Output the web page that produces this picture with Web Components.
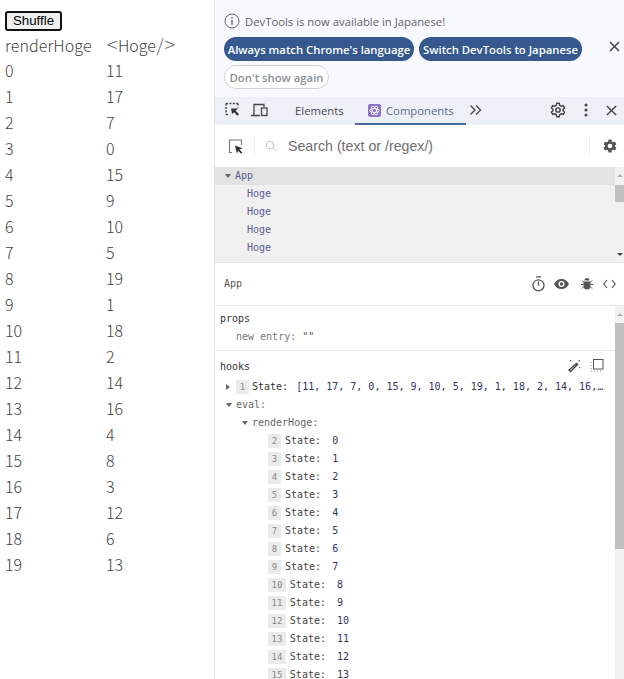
<!DOCTYPE html>
<html lang="en">
<head>
<meta charset="utf-8">
<title>Shuffle</title>
<style>
html, body { margin: 0; height: 100%; background: #fff; overflow: hidden; }
body { display: flex; width: 624px; height: 679px; }
</style>
</head>
<body>
<app-pane></app-pane>
<dev-tools>
  <info-bar></info-bar>
  <tab-bar></tab-bar>
  <search-bar></search-bar>
  <component-tree></component-tree>
  <inspected-head></inspected-head>
  <inspected-data></inspected-data>
</dev-tools>
<script>
const ORDER = [11, 17, 7, 0, 15, 9, 10, 5, 19, 1, 18, 2, 14, 16, 4, 8, 3, 12, 6, 13];

class AppPane extends HTMLElement {
  constructor() {
    super();
    const rows = ORDER.map((v, i) => `<span>${i}</span><span>${v}</span>`).join("");
    this.attachShadow({ mode: "open" }).innerHTML = `
<style>
:host {
  display: block;
  box-sizing: border-box;
  flex: none;
  width: 215px;
  height: 679px;
  padding: 11px 0 0 5px;
  border-right: 1px solid #e4e4e4;
  color: #444;
  font: 300 16px/26px "Noto Sans CJK JP", "Noto Sans", sans-serif;
}
button {
  display: block;
  box-sizing: border-box;
  width: 57px;
  height: 20px;
  padding: 0;
  margin-bottom: 1px;
  background: #efefef;
  border: 2px solid #111;
  border-radius: 3px;
  color: #000;
  font: 13.3px/16px "Liberation Sans", Arial, sans-serif;
}
.grid {
  display: grid;
  grid-template-columns: 101px auto;
  grid-template-rows: 25px;
  grid-auto-rows: 26px;
  justify-content: start;
}
.head { letter-spacing: .1px; }
.wide { display: inline-block; width: 12px; line-height: 1; text-align: center; color: #666; font-size: 20px; }
.slash { display: inline-block; width: 8px; line-height: 1; text-align: center; color: #666; font-size: 18px; }
</style>
<button>Shuffle</button>
<div class="grid"><span class="head">renderHoge</span><span><span class="wide">&lt;</span>Hoge<span class="slash">/</span><span class="wide">&gt;</span></span>${rows}</div>`;
  }
}

class DevTools extends HTMLElement {
  constructor() {
    super();
    this.attachShadow({ mode: "open" }).innerHTML = `
<style>
:host {
  display: flex;
  flex-direction: column;
  width: 409px;
  height: 679px;
  overflow: hidden;
  font-family: "Liberation Sans", Arial, sans-serif;
}
</style>
<slot></slot>`;
  }
}

class InfoBar extends HTMLElement {
  constructor() {
    super();
    this.attachShadow({ mode: "open" }).innerHTML = `
<style>
:host {
  display: block;
  position: relative;
  box-sizing: border-box;
  flex: none;
  height: 97px;
  padding: 13px 0 0 9px;
  background: #f8f9fe;
  font-family: "Open Sans", "Noto Sans", sans-serif;
}
.msg {
  display: flex;
  align-items: center;
  gap: 5px;
  height: 16px;
  color: #5f6368;
  font-size: 11.3px;
}
.actions {
  display: flex;
  flex-wrap: wrap;
  gap: 4px 5px;
  width: 370px;
  margin-top: 8px;
}
.btn {
  display: flex;
  align-items: center;
  justify-content: center;
  box-sizing: border-box;
  height: 24px;
  border-radius: 12px;
  background: #35598f;
  color: #fff;
  font-size: 11.3px;
  font-weight: 600;
  white-space: nowrap;
}
.one { width: 190px; }
.two { width: 163px; }
.three {
  width: 105px;
  background: #fff;
  border: 1px solid #d0d3d8;
  color: #8b8f94;
}
.close { position: absolute; left: 394px; top: 41px; }
</style>
<div class="msg">
  <svg width="16" height="16" viewBox="0 0 16 16" fill="none" stroke="#5f6368">
    <circle cx="8" cy="8" r="7"/>
    <path d="M8 7v5M8 4v1.4" stroke-width="1.4"/>
  </svg>
  <span>DevTools is now available in Japanese!</span>
</div>
<div class="actions">
  <div class="btn one">Always match Chrome's language</div>
  <div class="btn two">Switch DevTools to Japanese</div>
  <div class="btn three">Don't show again</div>
</div>
<svg class="close" width="12" height="12" viewBox="0 0 12 12" stroke="#444" stroke-width="1.5">
  <path d="M1 1l9 9M10 1l-9 9"/>
</svg>`;
  }
}

class TabBar extends HTMLElement {
  constructor() {
    super();
    this.attachShadow({ mode: "open" }).innerHTML = `
<style>
:host {
  display: flex;
  align-items: center;
  box-sizing: border-box;
  flex: none;
  height: 28px;
  padding-bottom: 2px;
  background: #eef0f8;
  color: #4a4d52;
  font: 11.3px "Open Sans", "Noto Sans", sans-serif;
}
svg { flex: none; display: block; }
.inspect { margin-left: 10px; }
.device { margin-left: 10px; }
.elements { margin-left: 26px; width: 60px; }
.tab {
  display: flex;
  align-items: center;
  gap: 5px;
  box-sizing: border-box;
  width: 111px;
  height: 28px;
  margin-bottom: -2px;
  padding-left: 13px;
  border-bottom: 2px solid #4a6a9c;
  color: #5a6b8c;
}
.more { margin-left: 3px; }
.gear { margin-left: 68px; }
.dots { margin-left: 18px; }
.close { margin-left: 18px; }
</style>
<svg class="inspect" width="16" height="16" viewBox="0 0 16 16" fill="none" stroke="#444">
  <path d="M1 1.5h12M1 1.5v11M1 12.5h3M13 1.5v4" stroke-dasharray="2 1.4" stroke-width="1.4"/>
  <path d="M6 6.5h7l-2.3 2.2 3.3 3.6-1.6 1.5-3.2-3.6L7 12z" fill="#333" stroke="none"/>
</svg>
<svg class="device" width="18" height="16" viewBox="0 0 18 16" fill="none" stroke="#444" stroke-width="1.3">
  <path d="M0 13.5h9M3 13V2.5h10V5"/>
  <rect x="10.5" y="6" width="5.5" height="7.5"/>
</svg>
<span class="elements">Elements</span>
<div class="tab">
  <svg width="13" height="13" viewBox="0 0 13 13">
    <rect width="13" height="13" rx="2" fill="#8d74c9"/>
    <g fill="none" stroke="#fff" stroke-width=".8">
      <ellipse cx="6.5" cy="6.5" rx="4.8" ry="2"/>
      <ellipse cx="6.5" cy="6.5" rx="4.8" ry="2" transform="rotate(60 6.5 6.5)"/>
      <ellipse cx="6.5" cy="6.5" rx="4.8" ry="2" transform="rotate(120 6.5 6.5)"/>
    </g>
  </svg>
  <span>Components</span>
</div>
<svg class="more" width="13" height="12" viewBox="0 0 13 12" fill="none" stroke="#555" stroke-width="1.5">
  <path d="M1.5 1.5L6 6l-4.5 4.5M7 1.5L11.5 6 7 10.5"/>
</svg>
<svg class="gear" width="16" height="16" viewBox="0 0 24 24" fill="none" stroke="#444" stroke-width="2.2">
  <circle cx="12" cy="12" r="3.2"/>
  <path d="M10 2h4l.6 3 2.4 1.4 2.9-1 2 3.5-2.3 2v2.2l2.3 2-2 3.5-2.9-1-2.4 1.4-.6 3h-4l-.6-3-2.4-1.4-2.9 1-2-3.5 2.3-2v-2.2l-2.3-2 2-3.5 2.9 1L9.4 5z" stroke-linejoin="round"/>
</svg>
<svg class="dots" width="4" height="14" viewBox="0 0 4 14" fill="#444">
  <circle cx="2" cy="2" r="1.5"/><circle cx="2" cy="7" r="1.5"/><circle cx="2" cy="12" r="1.5"/>
</svg>
<svg class="close" width="11" height="11" viewBox="0 0 12 12" stroke="#444" stroke-width="1.5">
  <path d="M1 1l10 10M11 1L1 11"/>
</svg>`;
  }
}

class SearchBar extends HTMLElement {
  constructor() {
    super();
    this.attachShadow({ mode: "open" }).innerHTML = `
<style>
:host {
  display: flex;
  align-items: center;
  box-sizing: border-box;
  flex: none;
  height: 42px;
  padding-right: 7px;
  background: #fff;
  color: #6e6e6e;
  font: 14.2px "Liberation Sans", Arial, sans-serif;
}
svg { flex: none; display: block; }
.pick { margin-left: 13px; }
.sep { flex: none; width: 1px; height: 20px; background: #f0f0f0; }
.sep.a { margin-left: 10px; }
.glass { margin-left: 10px; }
.text { margin-left: 11px; flex: 1; white-space: nowrap; }
.gear { margin-left: 13px; }
</style>
<svg class="pick" width="16" height="17" viewBox="0 0 16 17" fill="none" stroke="#777" stroke-width="1.1">
  <path d="M4 14.5H1.5V2h12v5"/>
  <path d="M7 7.5l7.5 2.8-3 1.2 2.8 3-1.3 1.2-2.8-3-1.3 2.8z" fill="#333" stroke="none"/>
</svg>
<span class="sep a"></span>
<svg class="glass" width="12" height="12" viewBox="0 0 12 12" fill="none" stroke="#c4c4c4">
  <circle cx="5" cy="5" r="3.8"/><path d="M8 8l3.5 3.5"/>
</svg>
<span class="text">Search (text or /regex/)</span>
<span class="sep"></span>
<svg class="gear" width="14" height="14" viewBox="0 0 24 24" fill="#555">
  <path fill-rule="evenodd" d="M9.5 1h5l.7 3.3 2 1.2 3.3-1 2.5 4.3-2.5 2.2v2l2.5 2.2-2.5 4.3-3.3-1-2 1.2-.7 3.3h-5l-.7-3.3-2-1.2-3.3 1L1 15.2 3.5 13v-2L1 8.8l2.5-4.3 3.3 1 2-1.2zM12 8a4 4 0 100 8 4 4 0 000-8z"/>
</svg>`;
  }
}

class ComponentTree extends HTMLElement {
  constructor() {
    super();
    const hoge = '<div class="row child">Hoge</div>'.repeat(4);
    this.attachShadow({ mode: "open" }).innerHTML = `
<style>
:host {
  display: flex;
  box-sizing: border-box;
  flex: none;
  height: 96px;
  overflow: hidden;
  background: #f0f0f0;
  border-bottom: 1px solid #e6e6e6;
  color: #5c5c96;
  font: 10px/18px "DejaVu Sans Mono", "Liberation Mono", monospace;
}
.rows { flex: 1; }
.row { height: 18px; }
.app { display: flex; align-items: center; background: #e3e3e3; padding-left: 10px; gap: 4px; }
.child { padding-left: 32px; }
.arrow { width: 0; height: 0; border: 3px solid transparent; border-top: 4px solid #666; border-bottom: 0; }
.bar { position: relative; flex: none; width: 9px; background: #f1f1f1; }
.up, .down { position: absolute; left: 2px; width: 0; height: 0; border: 3px solid transparent; }
.up { top: 7px; border-top: 0; border-bottom: 3px solid #b0b0b0; }
.down { bottom: 6px; border-bottom: 0; border-top: 3px solid #444; }
.thumb { position: absolute; top: 18px; left: 0; width: 9px; height: 17px; background: #c1c1c1; }
</style>
<div class="rows">
  <div class="row app"><span class="arrow"></span><span>App</span></div>
  ${hoge}
</div>
<div class="bar"><span class="up"></span><span class="thumb"></span><span class="down"></span></div>`;
  }
}

class InspectedHead extends HTMLElement {
  constructor() {
    super();
    this.attachShadow({ mode: "open" }).innerHTML = `
<style>
:host {
  display: flex;
  align-items: center;
  box-sizing: border-box;
  flex: none;
  height: 43px;
  padding: 0 0 1px 9px;
  background: #fff;
  border-bottom: 1px solid #e8e8e8;
  color: #555;
  font: 10px "DejaVu Sans Mono", "Liberation Mono", monospace;
}
svg { flex: none; display: block; }
.name { flex: 1; }
.eye { margin-left: 9px; }
.bug { margin-left: 12px; }
.code { margin-left: 10px; margin-right: 8px; }
</style>
<span class="name">App</span>
<svg width="13" height="16" viewBox="0 0 13 16" fill="none" stroke="#555" stroke-width="1.3">
  <path d="M4 .8h5M6.5 5.5V9.5"/><circle cx="6.5" cy="9.3" r="5.5"/>
</svg>
<svg class="eye" width="15" height="10" viewBox="0 0 15 10">
  <path fill="#555" fill-rule="evenodd" d="M7.5 0C4 0 1.5 2 0 5c1.5 3 4 5 7.5 5S13.5 8 15 5c-1.5-3-4-5-7.5-5zm0 2a3 3 0 110 6 3 3 0 010-6z"/>
  <circle cx="7.5" cy="5" r="1.7" fill="#555"/>
</svg>
<svg class="bug" width="12" height="13" viewBox="0 0 12 13" fill="#555">
  <path d="M3.5 3.5a2.5 2.5 0 015 0zM2.5 4.5h7V9a3.5 3.5 0 01-7 0z"/>
  <path d="M1 3.5l2 2M11 3.5l-2 2M0 7.5h2.5M12 7.5H9.5M1 11.5L3 9.5M11 11.5L9 9.5" stroke="#555" fill="none"/>
</svg>
<svg class="code" width="13" height="10" viewBox="0 0 13 10" fill="none" stroke="#555" stroke-width="1.2">
  <path d="M4 1L.8 5 4 9M9 1l3.2 4L9 9"/>
</svg>`;
  }
}

class StateRow extends HTMLElement {
  constructor() {
    super();
    this.attachShadow({ mode: "open" }).innerHTML = `
<style>
:host { display: flex; align-items: center; height: 18px; padding-left: 53px; white-space: pre; }
.num {
  display: flex; align-items: center; justify-content: center;
  box-sizing: border-box; height: 14px; min-width: 13px; padding: 0 3.5px; margin-right: 4px;
  background: #ebebeb; color: #8a8a8a; font-size: 9px;
}
.val { margin-left: 11px; color: #33335f; }
</style>
<span class="num"></span><span class="key"></span><span class="val"></span>`;
  }
  connectedCallback() {
    const s = this.shadowRoot;
    s.querySelector(".num").textContent = this.getAttribute("n");
    s.querySelector(".key").textContent = "State:";
    s.querySelector(".val").textContent = this.getAttribute("v");
  }
}

class InspectedData extends HTMLElement {
  constructor() {
    super();
    const rows = Array.from({ length: 14 }, (_, i) =>
      `<state-row n="${i + 2}" v="${i}"></state-row>`).join("");
    this.attachShadow({ mode: "open" }).innerHTML = `
<style>
:host {
  display: flex;
  flex: 1;
  min-height: 0;
  background: #fff;
  color: #444;
  font: 10px/18px "DejaVu Sans Mono", "Liberation Mono", monospace;
}
.body { flex: 1; min-width: 0; overflow: hidden; }
.props { box-sizing: border-box; height: 45px; padding: 4px 0 0 5px; border-bottom: 1px solid #e8e8e8; }
.label { height: 18px; color: #333; }
.entry { padding-left: 16px; color: #777; }
.entry span { color: #555; }
.hooks { position: relative; padding-top: 7px; }
.tools { position: absolute; top: 8px; right: 11px; display: flex; gap: 9px; }
.label.h { height: 20px; padding-left: 5px; }
.arrow-row { display: flex; align-items: center; height: 18px; color: #666; }
.right { width: 0; height: 0; margin: 0 6px 0 11px; border: 3px solid transparent; border-left: 4px solid #666; border-right: 0; }
.down { width: 0; height: 0; border: 3px solid transparent; border-top: 4px solid #666; border-bottom: 0; }
.eval { padding-left: 11px; gap: 4px; }
.render { padding-left: 27px; gap: 4px; }
.num { display: flex; align-items: center; justify-content: center; width: 13px; height: 14px; margin-right: 3px; background: #ebebeb; color: #8a8a8a; font-size: 9px; }
.state { color: #333; white-space: pre; }
.state b { margin-left: 8px; font-weight: 400; color: #33335f; }
.bar { position: relative; flex: none; width: 9px; background: #f1f1f1; }
.up { position: absolute; top: 7px; left: 2px; width: 0; height: 0; border: 3px solid transparent; border-top: 0; border-bottom: 3px solid #b0b0b0; }
.thumb { position: absolute; top: 17px; left: 0; width: 9px; height: 226px; background: #c1c1c1; }
</style>
<div class="body">
  <div class="props">
    <div class="label">props</div>
    <div class="entry">new entry: <span>""</span></div>
  </div>
  <div class="hooks">
    <div class="label h">hooks</div>
    <div class="tools">
      <svg width="14" height="14" viewBox="0 0 14 14" fill="#555">
        <path d="M9.5 4.5l1 1-7 7-1.5-1.5z" fill="none" stroke="#444" stroke-width="1.3"/>
        <path d="M8 6l1.5 1.5 2-2L10 4zM3 1h1.2v1.2H3zM12 1l1 1-1 1-1-1zM12 8h1.2v1.2H12z"/>
      </svg>
      <svg width="14" height="14" viewBox="0 0 14 14" fill="none" stroke="#555">
        <rect x="3.5" y=".5" width="9.5" height="9.5"/>
        <path d="M1 3v1M1 6v1M1 9v1M1 12h1M4 12h1M7 12h1M10 12h1" stroke="#888"/>
      </svg>
    </div>
    <div class="arrow-row"><span class="right"></span><span class="num">1</span><span class="state">State:<b>[11, 17, 7, 0, 15, 9, 10, 5, 19, 1, 18, 2, 14, 16,…</b></span></div>
    <div class="arrow-row eval"><span class="down"></span><span>eval:</span></div>
    <div class="arrow-row render"><span class="down"></span><span>renderHoge:</span></div>
    ${rows}
  </div>
</div>
<div class="bar"><span class="up"></span><span class="thumb"></span></div>`;
  }
}

customElements.define("app-pane", AppPane);
customElements.define("dev-tools", DevTools);
customElements.define("info-bar", InfoBar);
customElements.define("tab-bar", TabBar);
customElements.define("search-bar", SearchBar);
customElements.define("component-tree", ComponentTree);
customElements.define("inspected-head", InspectedHead);
customElements.define("state-row", StateRow);
customElements.define("inspected-data", InspectedData);
</script>
</body>
</html>
